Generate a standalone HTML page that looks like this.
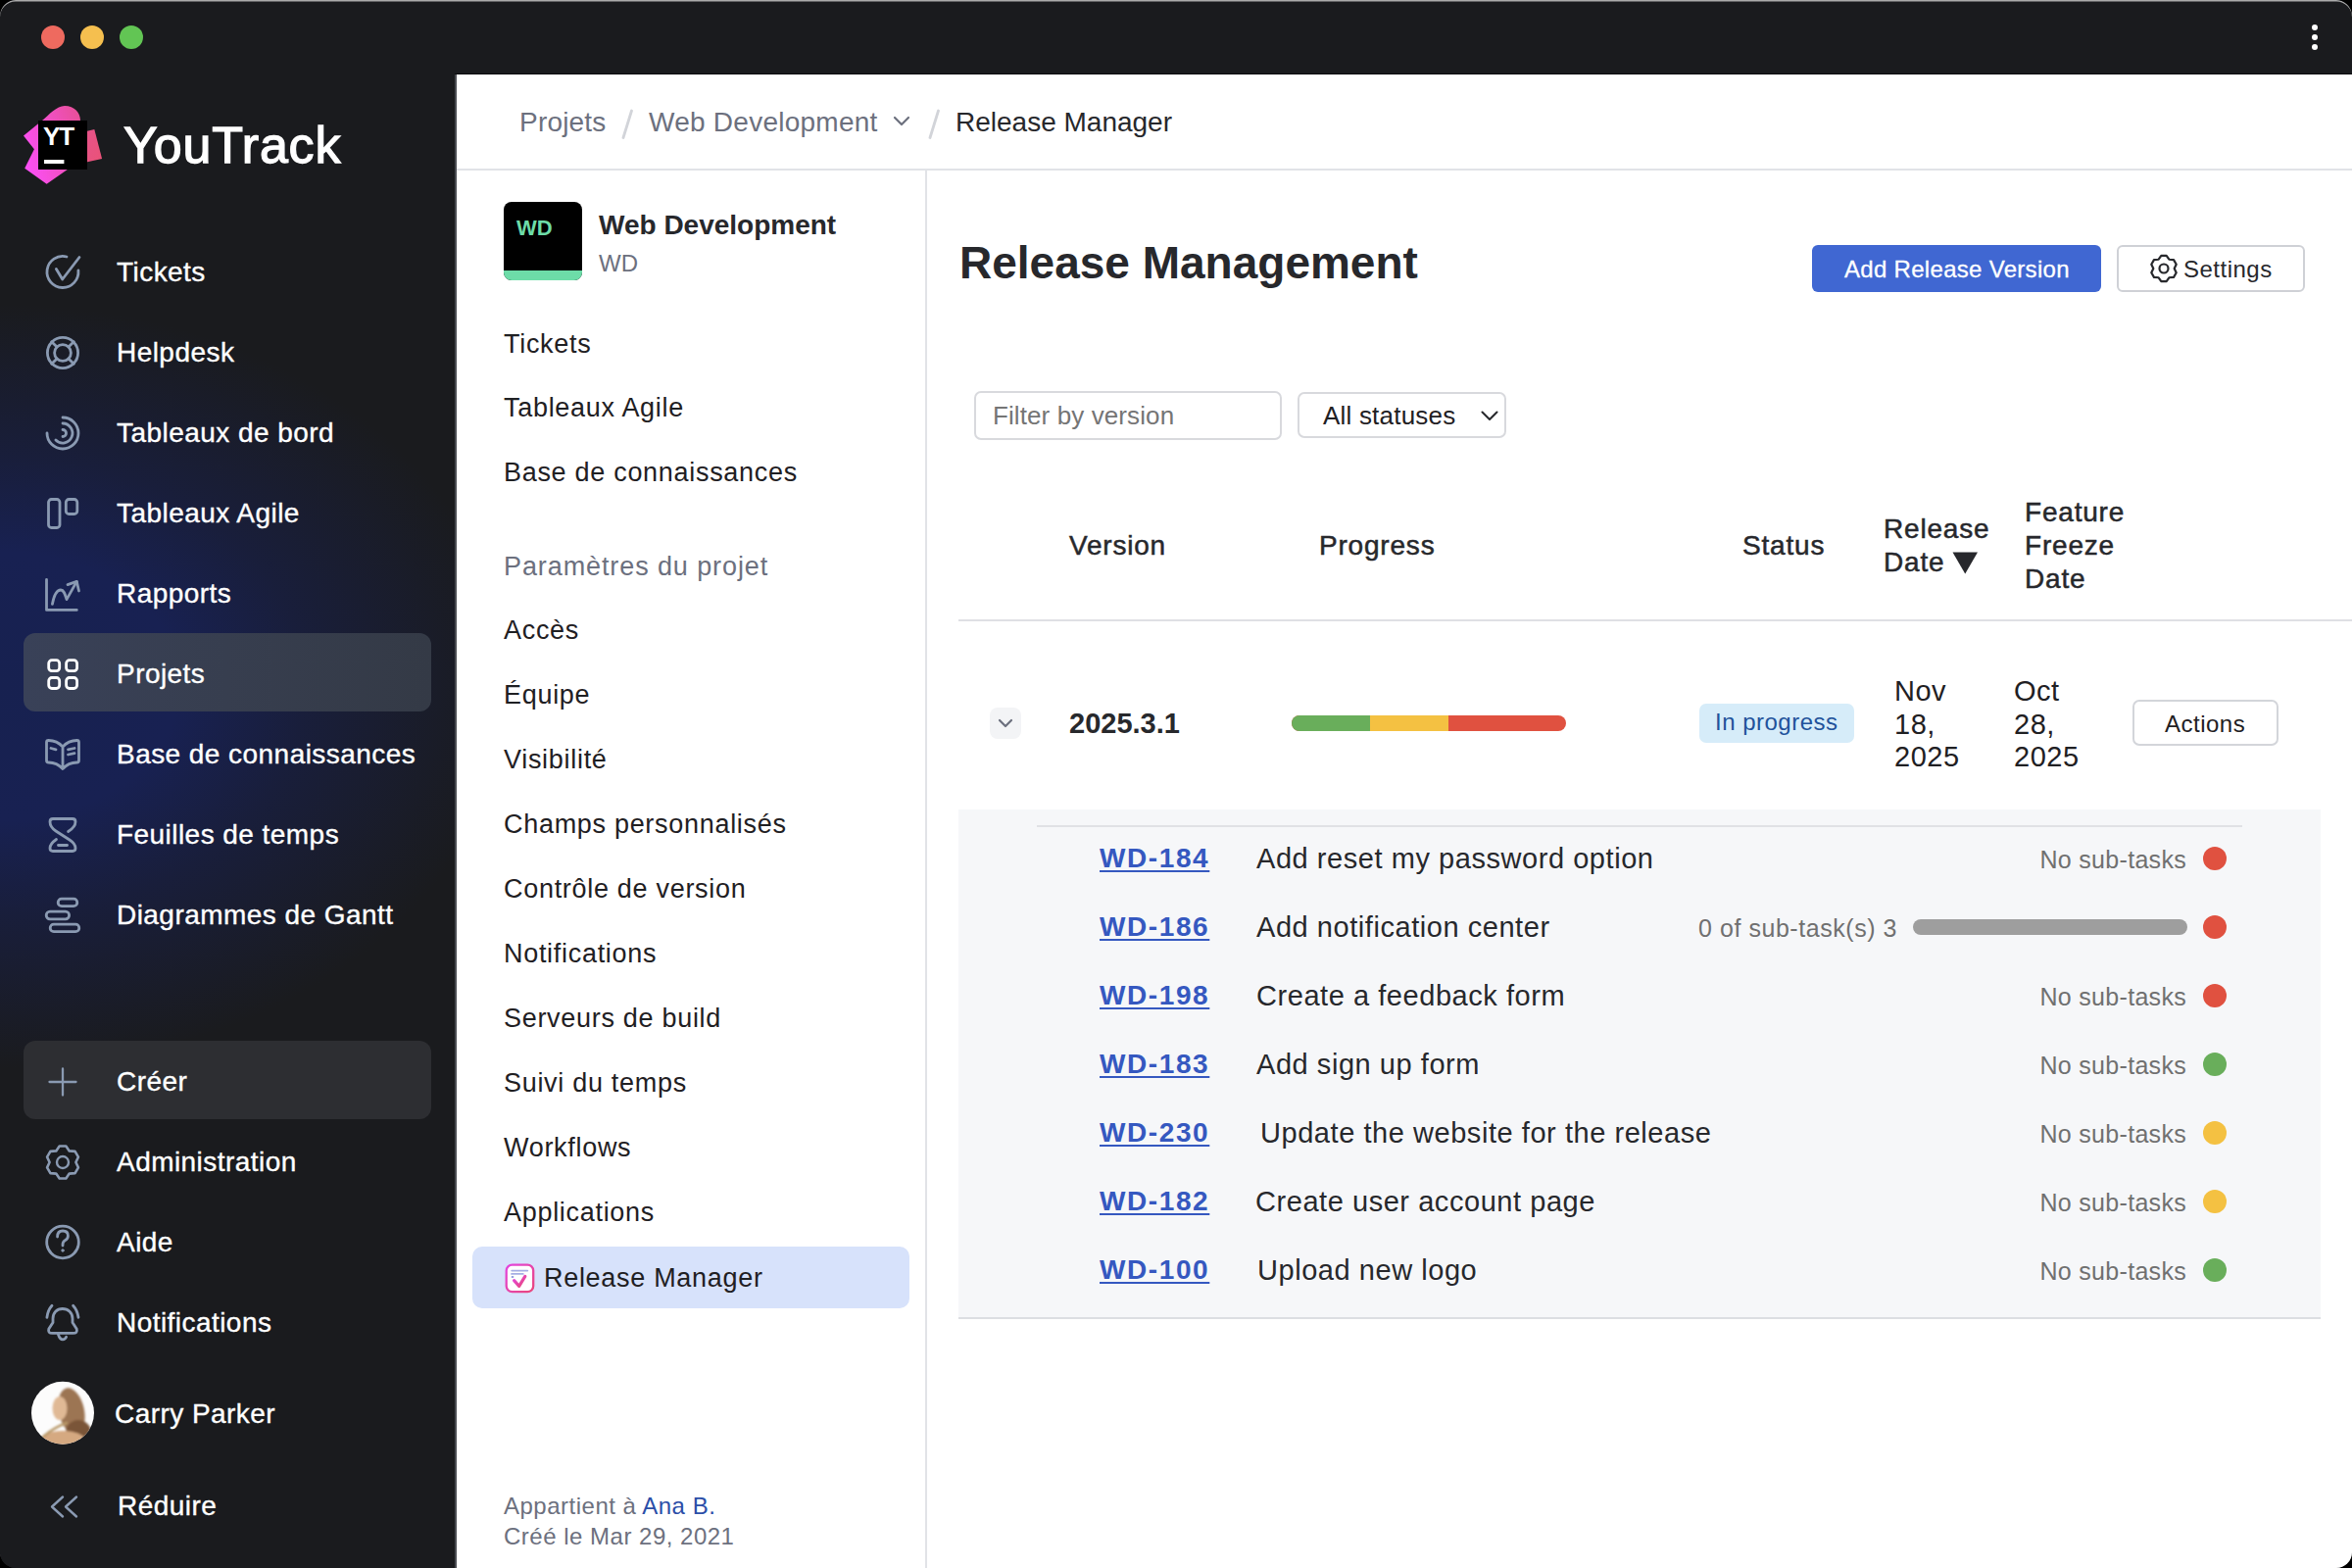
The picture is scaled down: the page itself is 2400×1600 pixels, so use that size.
<!DOCTYPE html>
<html><head><meta charset="utf-8">
<style>
*{box-sizing:border-box;margin:0;padding:0}
html,body{width:2400px;height:1600px;background:#000;overflow:hidden}
body{font-family:"Liberation Sans",sans-serif;position:relative}
.win{position:absolute;left:0;top:0;width:2400px;height:1600px;border-radius:16px;overflow:hidden;background:#1a1b1e}
.topline{position:absolute;left:0;top:0;width:2400px;height:2px;background:#a9a9a9}
.sbg{position:absolute;left:0;top:0;width:466px;height:1600px;
 background:radial-gradient(ellipse 520px 390px at 0px 700px,#172150 0%,#182152 35%,rgba(24,32,78,0.6) 60%,rgba(26,27,30,0) 100%),#1a1b1e}
.t{position:absolute;line-height:1;white-space:nowrap}
.sb{color:#fff;font-size:28px;left:119px;-webkit-text-stroke:0.35px #fff;letter-spacing:0.45px}
.ic{position:absolute;overflow:visible}
.ic *{fill:none;stroke:#8a9ab2;stroke-width:2.8;stroke-linecap:round;stroke-linejoin:round}
.dot{position:absolute;border-radius:50%}
.main{position:absolute;left:466px;top:76px;width:1934px;height:1524px;background:#fff}
.mainborder{position:absolute;left:464px;top:76px;width:2px;height:1524px;background:#4a4c52}
.maintop{position:absolute;left:464px;top:75px;width:1936px;height:1px;background:#0a0b0d}
.pm{color:#1f2023;font-size:27px;left:514px;letter-spacing:0.7px}
.th{font-size:28px;color:#27282c;-webkit-text-stroke:0.5px #27282c;letter-spacing:0.8px}
.rd{font-size:29px;color:#1f2023;letter-spacing:0.5px}
.key{font-size:28px;font-weight:700;color:#3558c0;text-decoration:underline;text-decoration-thickness:2px;text-underline-offset:3px;letter-spacing:1.6px}
.tt{font-size:29px;color:#27282c;letter-spacing:0.55px}
.ns{font-size:25px;color:#707070;letter-spacing:0.3px}
</style></head><body>
<div class="win">
<div class="sbg"></div>

<!-- traffic lights -->
<div class="dot" style="left:42px;top:26px;width:24px;height:24px;background:#ee6a5f"></div>
<div class="dot" style="left:82px;top:26px;width:24px;height:24px;background:#f5bf4f"></div>
<div class="dot" style="left:122px;top:26px;width:24px;height:24px;background:#62c554"></div>
<!-- kebab -->
<div class="dot" style="left:2359px;top:25px;width:6px;height:6px;background:#fff"></div>
<div class="dot" style="left:2359px;top:35px;width:6px;height:6px;background:#fff"></div>
<div class="dot" style="left:2359px;top:45px;width:6px;height:6px;background:#fff"></div>

<!-- logo -->
<svg class="ic" style="left:0;top:0" width="120" height="200" viewBox="0 0 120 200">
 <defs><linearGradient id="lg1" x1="0" y1="0.6" x2="1" y2="0.2"><stop offset="0" stop-color="#fb4ff4"/><stop offset="1" stop-color="#e8509a"/></linearGradient>
 <linearGradient id="lg2" x1="0" y1="0" x2="1" y2="1"><stop offset="0" stop-color="#e6538a"/><stop offset="1" stop-color="#ea5277"/></linearGradient></defs>
 <path d="M24 138.4 L43 123 C50 117 58 108 66 108 C76 108 82 115 82 123 L82 173 L68.8 172.9 L47.6 187.8 L25.2 171.7 L34.9 152.2 Z" style="fill:url(#lg1);stroke:none"/>
 <path d="M88 134 L96.3 132.1 L104.1 162 L88 165.6 Z" style="fill:url(#lg2);stroke:none"/>
 <rect x="39" y="123" width="50" height="50" style="fill:#000;stroke:none"/>
 <rect x="45" y="163" width="20.4" height="4" style="fill:#fff;stroke:none"/>
</svg>
<div class="t" style="left:44px;top:126px;font-size:26px;color:#fff;font-weight:700;letter-spacing:-1px">YT</div>
<div class="t" style="left:126px;top:122px;font-size:52px;color:#fff;-webkit-text-stroke:1.3px #fff;letter-spacing:0.8px">YouTrack</div>

<!-- sidebar items -->
<div class="t sb" style="top:264px">Tickets</div>
<div class="t sb" style="top:346px">Helpdesk</div>
<div class="t sb" style="top:428px">Tableaux de bord</div>
<div class="t sb" style="top:510px">Tableaux Agile</div>
<div class="t sb" style="top:592px">Rapports</div>
<div style="position:absolute;left:24px;top:646px;width:416px;height:80px;border-radius:12px;background:linear-gradient(90deg,#394158 0%,#373e4f 50%,#343a46 100%)"></div>
<div class="t sb" style="top:674px">Projets</div>
<div class="t sb" style="top:756px">Base de connaissances</div>
<div class="t sb" style="top:838px">Feuilles de temps</div>
<div class="t sb" style="top:920px">Diagrammes de Gantt</div>
<div style="position:absolute;left:24px;top:1062px;width:416px;height:80px;border-radius:12px;background:#2d2e32"></div>
<div class="t sb" style="top:1090px">Créer</div>
<div class="t sb" style="top:1172px">Administration</div>
<div class="t sb" style="top:1254px">Aide</div>
<div class="t sb" style="top:1336px">Notifications</div>
<div class="t sb" style="top:1429px;left:117px">Carry Parker</div>
<div class="t sb" style="top:1523px;left:120px">Réduire</div>

<!-- sidebar icons -->
<svg class="ic" style="left:0;top:0" width="466" height="1600" viewBox="0 0 466 1600">
 <path d="M68 262 A16 16 0 1 0 79.9 276"/>
 <path d="M57.4 274.5 L63.7 285 L81 262.5"/>
 <circle cx="64" cy="360" r="15.6"/>
 <circle cx="64" cy="360" r="8.4"/>
 <path d="M58.1 354.1 L52.7 348.7 M69.9 354.1 L75.3 348.7 M58.1 365.9 L52.7 371.3 M69.9 365.9 L75.3 371.3"/>
 <path d="M64 426 A16 16 0 1 1 48 442"/>
 <path d="M64 432 A10 10 0 1 1 56.9 449.1"/>
 <path d="M64 438.5 A3.5 3.5 0 0 1 64 445.5"/>
 <rect x="49.5" y="509.5" width="11.5" height="29" rx="3"/>
 <rect x="67.3" y="509.5" width="11.5" height="15" rx="3"/>
 <path d="M47.5 591.5 V622.4 H78.3" style="stroke-width:2.8"/>
 <path d="M53.4 616.4 C55 608 58 602 62 602 C65.5 602 66.5 607 68 611.6 L78.3 593.4" style="stroke-width:2.8"/>
 <path d="M69 596.6 L78.3 593.4 L80.5 603" style="stroke-width:2.8"/>
 <rect x="49.7" y="673.7" width="11" height="11" rx="3.2" style="stroke:#fff"/>
 <rect x="67.6" y="673.7" width="11" height="11" rx="3.2" style="stroke:#fff"/>
 <rect x="49.7" y="691.5" width="11" height="11" rx="3.2" style="stroke:#fff"/>
 <rect x="67.6" y="691.5" width="11" height="11" rx="3.2" style="stroke:#fff"/>
 <path d="M64 762 C60 757.5 54 755.5 49.5 755.5 Q47.5 755.5 47.5 757.5 L47.5 776 Q47.5 778 49.5 778 C55 778 60 780 64 784.5 C68 780 73 778 78.5 778 Q80.5 778 80.5 776 L80.5 757.5 Q80.5 755.5 78.5 755.5 C74 755.5 68 757.5 64 762 Z M64 762 V783"/>
 <path d="M52 763.5 L57 764.8 M69.5 764.8 L76 763.5 M69.5 770 L76 768.7"/>
 <path d="M69.6 848.5 Q77 844 77 838.5 Q77 835.5 74 835.5 H54 Q51 835.5 51 838.5 Q51 844 57 848 L71 857 Q77 861 77 865.5 Q77 868.5 74 868.5 H54 Q51 868.5 51 865.5 Q51 861 57.5 856.5"/>
 <path d="M59.5 862.5 H68.5"/>
 <rect x="59.2" y="917.2" width="19.6" height="7.4" rx="3.7"/>
 <rect x="47.2" y="930.2" width="23.4" height="7.6" rx="3.8"/>
 <rect x="51.2" y="943.2" width="29.6" height="7.4" rx="3.7"/>
 <path d="M50.5 1104 H77.5 M64 1090.5 V1117.5" style="stroke-width:2.3"/>
 <path d="M60.65 1169.54 L67.35 1169.54 L70.70 1174.40 L76.58 1174.87 L79.93 1180.67 L77.40 1186.00 L79.93 1191.33 L76.58 1197.13 L70.70 1197.60 L67.35 1202.46 L60.65 1202.46 L57.30 1197.60 L51.42 1197.13 L48.07 1191.33 L50.60 1186.00 L48.07 1180.67 L51.42 1174.87 L57.30 1174.40 Z" style="stroke-width:2.6"/>
 <circle cx="64" cy="1186" r="6" style="stroke-width:2.4"/>
 <circle cx="64" cy="1267.5" r="16.3"/>
 <path d="M58.6 1262 Q58.6 1256 64 1256 Q69.4 1256 69.4 1261 Q69.4 1264.3 66.3 1265.8 Q64 1267 64 1270 V1271"/>
 <circle cx="64" cy="1276" r="1.2" style="fill:#8a9ab2;stroke-width:1"/>
  <path d="M63.8 1335.5 C58 1335.5 54 1339.5 54 1345.5 L54 1349.5 L49.8 1356 Q48.5 1360.4 53.5 1360.4 H74.5 Q79.5 1360.4 78.2 1356 L74 1349.5 L74 1345.5 C74 1339.5 69.5 1335.5 63.8 1335.5 Z"/>
 <path d="M59.4 1361.5 Q61 1366.8 64 1366.8 Q66.5 1366.8 67.6 1364.3"/>
 <path d="M53 1332.2 Q48.7 1337 47.9 1344.3 M74.6 1332.2 Q79 1337 80 1344.3"/>
 <path d="M64 1527.5 L53 1537.5 L64 1547.5 M78 1527.5 L67 1537.5 L78 1547.5" style="stroke-width:2.4"/>
 <defs><filter id="avb" x="-20%" y="-20%" width="140%" height="140%"><feGaussianBlur stdDeviation="1.2"/></filter><clipPath id="av"><circle cx="64" cy="1441.8" r="32"/></clipPath>
 <radialGradient id="hair" cx="0.5" cy="0.4" r="0.6"><stop offset="0" stop-color="#b98a5c"/><stop offset="1" stop-color="#7d5a3c"/></radialGradient></defs>
 <g clip-path="url(#av)" style="stroke:none">
  <rect x="30" y="1408" width="68" height="68" style="fill:#fcfcfc;stroke:none"/>
  <g filter="url(#avb)">
  <ellipse cx="73" cy="1440" rx="13" ry="24" transform="rotate(-12 73 1440)" style="fill:#9c7452;stroke:none"/>
  <ellipse cx="80" cy="1462" rx="13" ry="13" style="fill:#7a5538;stroke:none"/>
  <ellipse cx="61" cy="1437" rx="7.5" ry="12" style="fill:#e0b995;stroke:none"/>
  <ellipse cx="64" cy="1474" rx="26" ry="14" style="fill:#d5a981;stroke:none"/>
  <path d="M44 1466 Q56 1456 68 1452" style="stroke:#b99a6a;stroke-width:2.5;fill:none"/>
  </g>
 </g>
</svg>

<!-- main panel -->
<div class="main"></div>
<div class="mainborder"></div>
<div class="maintop"></div>

<!-- breadcrumb -->
<div class="t" style="left:530px;top:111px;font-size:28px;color:#6c707e;letter-spacing:0.2px">Projets</div>
<svg class="ic" style="left:620px;top:100px" width="360" height="50" viewBox="620 100 360 50"><path d="M644.5 113 L636 140.5 M957.5 113 L949 140.5" style="stroke:#d2d4d9;stroke-width:2.8"/></svg>
<div class="t" style="left:662px;top:111px;font-size:28px;color:#6c707e;letter-spacing:0.25px">Web Development</div>
<svg class="ic" style="left:910px;top:116px" width="20" height="16" viewBox="0 0 20 16"><path d="M3 4 L10 11 L17 4" style="stroke:#6c707e;stroke-width:2.2"/></svg>

<div class="t" style="left:975px;top:111px;font-size:28px;color:#27282c;letter-spacing:0px">Release Manager</div>
<div style="position:absolute;left:466px;top:172px;width:1934px;height:2px;background:#e1e3e7"></div>
<div style="position:absolute;left:944px;top:174px;width:2px;height:1426px;background:#e1e3e7"></div>

<!-- project panel -->
<div style="position:absolute;left:514px;top:206px;width:80px;height:80px;border-radius:8px;background:#000;overflow:hidden"><div style="position:absolute;left:0;bottom:0;width:80px;height:10px;background:#6ddca8"></div></div>
<div class="t" style="left:527px;top:222px;font-size:22px;font-weight:700;color:#6ddca8">WD</div>
<div class="t" style="left:611px;top:216px;font-size:28px;font-weight:700;color:#27282c">Web Development</div>
<div class="t" style="left:611px;top:257px;font-size:24px;color:#6c707e">WD</div>

<div class="t pm" style="top:338px">Tickets</div>
<div class="t pm" style="top:403px">Tableaux Agile</div>
<div class="t pm" style="top:469px">Base de connaissances</div>
<div class="t pm" style="top:565px;color:#6c707e;letter-spacing:0.9px">Paramètres du projet</div>
<div class="t pm" style="top:630px">Accès</div>
<div class="t pm" style="top:696px">Équipe</div>
<div class="t pm" style="top:762px">Visibilité</div>
<div class="t pm" style="top:828px">Champs personnalisés</div>
<div class="t pm" style="top:894px">Contrôle de version</div>
<div class="t pm" style="top:960px">Notifications</div>
<div class="t pm" style="top:1026px">Serveurs de build</div>
<div class="t pm" style="top:1092px">Suivi du temps</div>
<div class="t pm" style="top:1158px">Workflows</div>
<div class="t pm" style="top:1224px">Applications</div>
<div style="position:absolute;left:482px;top:1272px;width:446px;height:63px;border-radius:10px;background:#d7e2fb"></div>
<svg class="ic" style="left:508px;top:1284px" width="44" height="40" viewBox="0 0 44 40">
 <defs><linearGradient id="rmg" x1="0" y1="0" x2="1" y2="1"><stop offset="0" stop-color="#e346e0"/><stop offset="1" stop-color="#e9467a"/></linearGradient></defs>
 <rect x="8.7" y="6.6" width="27.5" height="27.6" rx="6" style="fill:#fff;stroke:url(#rmg);stroke-width:2.3"/>
 <path d="M14.2 12.6 H30.3 M14 15.9 H25.8" style="stroke:#a6aee4;stroke-width:1.8"/>
 <path d="M14.6 19 H15.4" style="stroke:#959fe0;stroke-width:2"/>
 <path d="M16.6 22.7 L21.7 28.3 L27.8 18.4" style="stroke:url(#rmg);stroke-width:3.2"/>
</svg>
<div class="t pm" style="top:1291px;left:555px">Release Manager</div>
<div class="t" style="left:514px;top:1525px;font-size:24px;color:#6c707e;letter-spacing:0.5px">Appartient à <span style="color:#2b4ea8">Ana B.</span></div>
<div class="t" style="left:514px;top:1556px;font-size:24px;color:#6c707e;letter-spacing:0.5px">Créé le Mar 29, 2021</div>

<!-- content header -->
<div class="t" style="left:979px;top:245px;font-size:46px;font-weight:700;color:#27282c">Release Management</div>
<div style="position:absolute;left:1849px;top:250px;width:295px;height:48px;border-radius:6px;background:#4067d2"></div>
<div class="t" style="left:1882px;top:263px;font-size:24px;color:#fff;letter-spacing:0.3px;-webkit-text-stroke:0.3px #fff">Add Release Version</div>
<div style="position:absolute;left:2160px;top:250px;width:192px;height:48px;border-radius:6px;border:2px solid #cfd1d6;background:#fff"></div>
<svg class="ic" style="left:2193px;top:259px" width="30" height="30" viewBox="0 0 30 30"><path d="M12.33 1.87 L17.67 1.87 L20.35 5.73 L25.04 6.12 L27.71 10.75 L25.70 15.00 L27.71 19.25 L25.04 23.88 L20.35 24.27 L17.67 28.13 L12.33 28.13 L9.65 24.27 L4.96 23.88 L2.29 19.25 L4.30 15.00 L2.29 10.75 L4.96 6.12 L9.65 5.73 Z" style="stroke:#27282c;stroke-width:2.2"/><circle cx="15" cy="15" r="4.5" style="stroke:#27282c;stroke-width:2.2"/></svg>
<div class="t" style="left:2228px;top:263px;font-size:24px;color:#27282c;letter-spacing:0.5px">Settings</div>

<!-- filters -->
<div style="position:absolute;left:994px;top:399px;width:314px;height:50px;border-radius:7px;border:2px solid #d8d9dd;background:#fff"></div>
<div class="t" style="left:1013px;top:411px;font-size:26px;color:#757575;letter-spacing:0.1px">Filter by version</div>
<div style="position:absolute;left:1324px;top:400px;width:213px;height:47px;border-radius:7px;border:2px solid #d8d9dd;background:#fff"></div>
<div class="t" style="left:1350px;top:411px;font-size:26px;color:#1f2023;letter-spacing:0.2px">All statuses</div>
<svg class="ic" style="left:1510px;top:416px" width="20" height="16" viewBox="0 0 20 16"><path d="M2.5 4.5 L10 12 L17.5 4.5" style="stroke:#27282c;stroke-width:2"/></svg>

<!-- table header -->
<div class="t th" style="left:1091px;top:543px">Version</div>
<div class="t th" style="left:1346px;top:543px">Progress</div>
<div class="t th" style="left:1778px;top:543px">Status</div>
<div class="t th" style="left:1922px;top:526px">Release</div>
<div class="t th" style="left:1922px;top:560px">Date</div>
<svg class="ic" style="left:1992px;top:563px" width="27" height="23" viewBox="0 0 27 23"><path d="M0.5 0.5 H26 L13.25 22.5 Z" style="fill:#27282c;stroke:none"/></svg>
<div class="t th" style="left:2066px;top:509px">Feature</div>
<div class="t th" style="left:2066px;top:543px">Freeze</div>
<div class="t th" style="left:2066px;top:577px">Date</div>
<div style="position:absolute;left:978px;top:632px;width:1422px;height:2px;background:#dfe0e4"></div>

<!-- release row -->
<div style="position:absolute;left:1010px;top:722px;width:32px;height:32px;border-radius:8px;background:#f3f4f6"></div>
<svg class="ic" style="left:1016px;top:728px" width="20" height="20" viewBox="0 0 20 20"><path d="M4 7 L10 13 L16 7" style="stroke:#6c707e;stroke-width:2.2"/></svg>
<div class="t" style="left:1091px;top:724px;font-size:29px;font-weight:700;color:#27282c">2025.3.1</div>
<div style="position:absolute;left:1318px;top:730px;width:280px;height:16px;border-radius:8px;overflow:hidden;background:#e05140">
 <div style="position:absolute;left:0;top:0;width:80px;height:16px;background:#69ae5b"></div>
 <div style="position:absolute;left:80px;top:0;width:80px;height:16px;background:#f4c142"></div>
</div>
<div style="position:absolute;left:1734px;top:718px;width:158px;height:40px;border-radius:7px;background:#d6ecf9"></div>
<div class="t" style="left:1750px;top:725px;font-size:24px;color:#22529b;letter-spacing:0.5px">In progress</div>
<div class="t rd" style="left:1933px;top:691px">Nov</div>
<div class="t rd" style="left:1933px;top:725px">18,</div>
<div class="t rd" style="left:1933px;top:758px">2025</div>
<div class="t rd" style="left:2055px;top:691px">Oct</div>
<div class="t rd" style="left:2055px;top:725px">28,</div>
<div class="t rd" style="left:2055px;top:758px">2025</div>
<div style="position:absolute;left:2176px;top:714px;width:149px;height:47px;border-radius:7px;border:2px solid #d3d5da;background:#fff"></div>
<div class="t" style="left:2209px;top:727px;font-size:24px;color:#1f2023;letter-spacing:0.5px">Actions</div>

<!-- subtasks -->
<div style="position:absolute;left:978px;top:826px;width:1390px;height:520px;background:#f6f7f9;border-bottom:2px solid #dcdee2"></div>
<div style="position:absolute;left:1058px;top:842px;width:1230px;height:2px;background:#e0e1e5"></div>
<div class="t key" style="left:1122px;top:862px">WD-184</div>
<div class="t tt" style="left:1282px;top:862px">Add reset my password option</div>
<div class="t ns" style="right:169px;top:865px">No sub-tasks</div>
<div class="dot" style="left:2248px;top:864px;width:24px;height:24px;background:#e05140"></div>
<div class="t key" style="left:1122px;top:932px">WD-186</div>
<div class="t tt" style="left:1282px;top:932px">Add notification center</div>
<div class="t ns" style="letter-spacing:0.55px;left:1733px;top:935px">0 of sub-task(s) 3</div>
<div style="position:absolute;left:1952px;top:938px;width:280px;height:16px;border-radius:8px;background:#9e9e9e"></div>
<div class="dot" style="left:2248px;top:934px;width:24px;height:24px;background:#e05140"></div>
<div class="t key" style="left:1122px;top:1002px">WD-198</div>
<div class="t tt" style="left:1282px;top:1002px">Create a feedback form</div>
<div class="t ns" style="right:169px;top:1005px">No sub-tasks</div>
<div class="dot" style="left:2248px;top:1004px;width:24px;height:24px;background:#e05140"></div>
<div class="t key" style="left:1122px;top:1072px">WD-183</div>
<div class="t tt" style="left:1282px;top:1072px">Add sign up form</div>
<div class="t ns" style="right:169px;top:1075px">No sub-tasks</div>
<div class="dot" style="left:2248px;top:1074px;width:24px;height:24px;background:#69ae5b"></div>
<div class="t key" style="left:1122px;top:1142px">WD-230</div>
<div class="t tt" style="left:1286px;top:1142px">Update the website for the release</div>
<div class="t ns" style="right:169px;top:1145px">No sub-tasks</div>
<div class="dot" style="left:2248px;top:1144px;width:24px;height:24px;background:#f4c142"></div>
<div class="t key" style="left:1122px;top:1212px">WD-182</div>
<div class="t tt" style="left:1281px;top:1212px">Create user account page</div>
<div class="t ns" style="right:169px;top:1215px">No sub-tasks</div>
<div class="dot" style="left:2248px;top:1214px;width:24px;height:24px;background:#f4c142"></div>
<div class="t key" style="left:1122px;top:1282px">WD-100</div>
<div class="t tt" style="left:1283px;top:1282px">Upload new logo</div>
<div class="t ns" style="right:169px;top:1285px">No sub-tasks</div>
<div class="dot" style="left:2248px;top:1284px;width:24px;height:24px;background:#69ae5b"></div>


<div style="position:absolute;left:0;top:0;width:2400px;height:1600px;border-radius:16px;box-shadow:inset 0 1.5px 0 0 #ababab;pointer-events:none"></div>
</div>
</body></html>
